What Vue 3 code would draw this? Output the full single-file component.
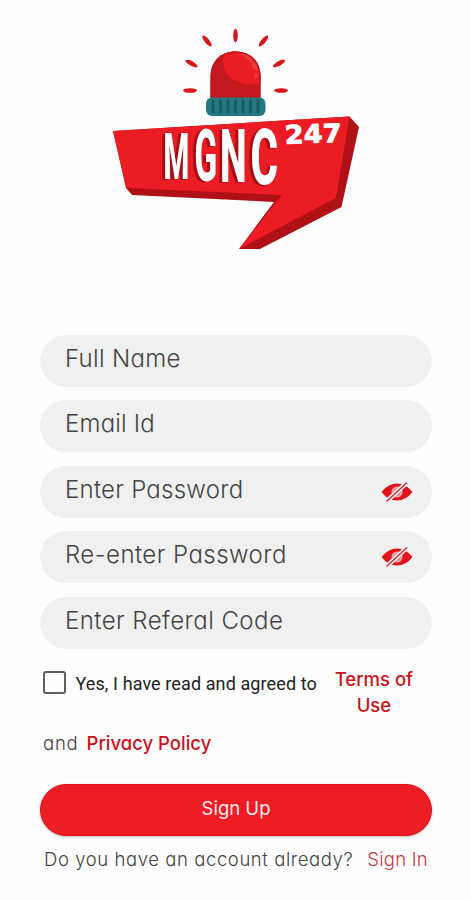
<template>
  <main class="signup">
    <svg class="logo" viewBox="100 20 270 240" role="img" aria-label="MGNC 247">
      <defs>
        <clipPath id="dome">
          <path d="M210.500 99V77C210.500 61 221 51.500 235.500 51.500S260.500 61 260.500 77V99Z" />
        </clipPath>
      </defs>
      <g class="rays">
        <ellipse
          v-for="ray in rays"
          :key="ray.x"
          rx="6.800"
          ry="2.300"
          :transform="`translate(${ray.x} ${ray.y}) rotate(${ray.angle})`"
        />
      </g>
      <g clip-path="url(#dome)">
        <rect x="210" y="51" width="51" height="49" fill="#c5191f" />
        <path d="M224 48C219 72 231 87 262 84V48Z" fill="#ec1c24" />
        <path d="M238 54Q250 57 253 69L258 71V53Z" fill="#e8393c" />
        <circle cx="256.500" cy="75.500" r="2.500" fill="#e8393c" />
        <path d="M210.500 99V77C210.500 61 221 51.500 235.500 51.500S260.500 61 260.500 77V99" fill="none" stroke="#b9161c" stroke-width="2.500" />
      </g>
      <path d="M113 131L349.500 116.500L359 127L341.500 207L260 249H239L274 202L132 195L126 188Z" fill="#b01117" />
      <path d="M113 131L349.500 116.500L336 198L239 249L282 195L126.500 188Z" fill="#ec1c24" />
      <rect x="206" y="97.500" width="59.500" height="18.500" rx="6" fill="#23797f" />
      <path
        d="M213 101V112M220.500 101V112M228 101V112M235.500 101V112M243 101V112M250.500 101V112M258 101V112"
        stroke="#175c66"
        stroke-width="2.800"
        stroke-linecap="round"
      />
      <g class="brand">
        <text
          v-for="item in letters"
          :key="item.char"
          :transform="`translate(${item.x} ${item.y}) scale(${item.sx} ${item.sy})`"
        >{{ item.char }}</text>
      </g>
      <text class="number" transform="translate(285 144) rotate(-2) scale(1.090 1.030)">247</text>
    </svg>

    <form class="form" @submit.prevent>
      <div v-for="field in fields" :key="field.label" class="field">
        <span class="label" :style="{ letterSpacing: field.spacing + 'px' }">{{ field.label }}</span>
        <svg v-if="field.secret" class="eye" viewBox="0 0 32 22">
          <path d="M0.500 11Q7 2.500 16 2.500T31.500 11Q25 19.500 16 19.500T0.500 11Z" fill="#e3131b" />
          <circle cx="16" cy="11" r="5.500" fill="#efa5a7" />
          <circle cx="16" cy="11" r="3.500" fill="#e58083" />
          <path d="M5.500 20.500L26 1.500" stroke="#f0f0f0" stroke-width="4.500" />
          <path d="M5.500 20.500L26 1.500" stroke="#c43b43" stroke-width="1.600" />
        </svg>
      </div>

      <div class="agree">
        <span class="box" role="checkbox" :aria-checked="agreed" @click="agreed = !agreed"></span>
        <span class="agree-text">Yes, I have read and agreed to</span>
        <a class="terms">Terms of<br />Use</a>
      </div>
      <div class="privacy">
        <span>and</span>
        <a>Privacy Policy</a>
      </div>

      <button class="submit" type="submit">Sign Up</button>
      <div class="signin">
        <span>Do you have an account already?</span>
        <a>Sign In</a>
      </div>
    </form>
  </main>
</template>

<script setup>
import { ref } from 'vue'

const agreed = ref(false)

const rays = [
  { x: 190, y: 90.500, angle: 0 },
  { x: 191.500, y: 63.500, angle: 29 },
  { x: 207, y: 41, angle: 50 },
  { x: 235.500, y: 35.500, angle: 90 },
  { x: 263.500, y: 41, angle: 130 },
  { x: 279, y: 63.500, angle: 151 },
  { x: 281, y: 90.500, angle: 180 },
]

const letters = [
  { char: 'M', x: 163.500, y: 178.500, sx: 0.460, sy: 1 },
  { char: 'G', x: 194.500, y: 181, sx: 0.520, sy: 1.120 },
  { char: 'N', x: 220, y: 181.500, sx: 0.590, sy: 1.160 },
  { char: 'C', x: 250.500, y: 183.500, sx: 0.660, sy: 1.220 },
]

const fields = [
  { label: 'Full Name', spacing: 0.3 },
  { label: 'Email Id', spacing: 0.2 },
  { label: 'Enter Password', spacing: 0.25, secret: true },
  { label: 'Re-enter Password', spacing: 0.45, secret: true },
  { label: 'Enter Referal Code', spacing: 0.45 },
]
</script>

<style>
body {
  margin: 0;
  background: #fefefe;
}
</style>

<style scoped>
.signup {
  box-sizing: border-box;
  min-height: 900px;
  padding: 20px 39px 0 40px;
  font-family: Inter, 'Open Sans', sans-serif;
  font-feature-settings: 'cv11' 1;
  font-weight: 300;
  color: #444;
}

.logo {
  display: block;
  width: 270px;
  height: 240px;
  margin: 0 auto 75px 60px;
}

.rays {
  fill: #d9151e;
}

.brand {
  font-family: Roboto, sans-serif;
  font-size: 64px;
  font-weight: 800;
  fill: #fff;
  filter: drop-shadow(-3px 1.5px 0 #a51016);
}

.number {
  font-family: 'DejaVu Sans', sans-serif;
  font-size: 25px;
  font-weight: 700;
  fill: #fff;
  stroke: #fff;
  stroke-width: 0.8px;
}

.form {
  display: flex;
  flex-direction: column;
}

.field {
  box-sizing: border-box;
  display: flex;
  align-items: center;
  justify-content: space-between;
  height: 52px;
  margin-bottom: 13.4px;
  padding: 0 19px 0 25px;
  border-radius: 26px;
  background: #f0f0f0;
}

.label {
  padding-bottom: 4px;
  font-size: 24px;
  line-height: 28px;
  white-space: nowrap;
}

.eye {
  width: 32px;
  height: 22px;
}

.agree {
  display: flex;
  align-items: flex-start;
  height: 54px;
  padding-top: 4px;
}

.box {
  box-sizing: border-box;
  width: 23px;
  height: 23px;
  margin: 5px 0 0 2.500px;
  border: 2px solid #606060;
  border-radius: 3px;
}

.agree-text {
  margin: 7px 0 0 10px;
  font-family: Roboto, sans-serif;
  font-size: 18px;
  font-weight: 400;
  line-height: 22px;
  letter-spacing: 0.1px;
  white-space: nowrap;
  color: #222;
}

.terms {
  width: 82px;
  margin-left: 16px;
  font-size: 18.5px;
  font-weight: 500;
  line-height: 26px;
  text-align: center;
  white-space: nowrap;
  color: #c9131a;
}

.privacy {
  display: flex;
  gap: 8px;
  height: 26px;
  margin: 10px 0 28px 3px;
  font-size: 18.5px;
  line-height: 26px;
}

.privacy span {
  letter-spacing: 0.8px;
}

.privacy a {
  font-weight: 500;
  color: #c9131a;
}

.submit {
  height: 52px;
  padding: 0 0 3px;
  border: 1px solid #d9141c;
  border-radius: 26px;
  background: #ee1c25;
  box-shadow: 0 1px 3px rgba(0, 0, 0, 0.25);
  font-family: inherit;
  font-feature-settings: inherit;
  font-size: 18.5px;
  font-weight: 400;
  color: #ffe9e9;
}

.signin {
  display: flex;
  justify-content: space-between;
  margin-top: 11px;
  padding: 0 4px 0 4px;
  font-size: 18.5px;
  line-height: 24px;
  letter-spacing: 0.58px;
  white-space: nowrap;
}

.signin a {
  letter-spacing: 0.25px;
  color: #c43a47;
}
</style>
